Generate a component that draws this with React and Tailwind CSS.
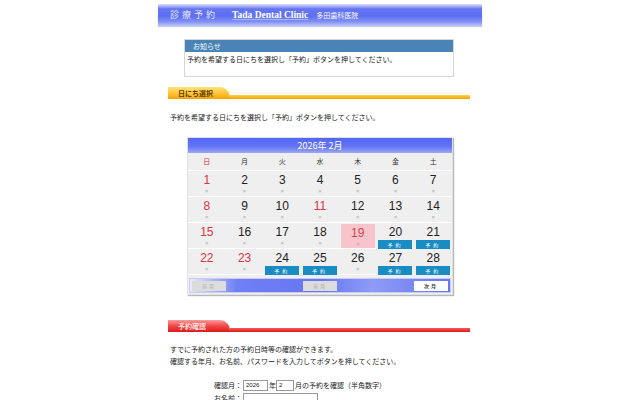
import React from "react";

const jp = { fontFamily: '"Noto Sans CJK JP", "Noto Sans", sans-serif' };
const num = { fontFamily: '"Liberation Sans", Arial, sans-serif' };

const weekdays = ["日", "月", "火", "水", "木", "金", "土"];

const weeks = [
    [1, 2, 3, 4, 5, 6, 7],
    [8, 9, 10, 11, 12, 13, 14],
    [15, 16, 17, 18, 19, 20, 21],
    [22, 23, 24, 25, 26, 27, 28],
];
const redDays = [1, 8, 11, 15, 22, 23];
const openDays = [20, 21, 24, 25, 27, 28];

function SectionHead({ title, tone }) {
    const orange = tone === "orange";
    return (
        <div className="flex items-end h-[12px] ml-[10px] mr-[12px]">
            <div
                className={
                    "w-[62px] h-[12px] rounded-tr-[10px] pl-[10px] flex items-center text-[7px] font-bold " +
                    (orange
                        ? "bg-[linear-gradient(#ffe27a,#ffc63a_50%,#f6a400)] text-[#5a3a00]"
                        : "bg-[linear-gradient(#ff9a9a,#f04848_50%,#dc1a1a)] text-[#ffe0e0]")
                }
            >
                {title}
            </div>
            <div className={"flex-1 h-[4px] " + (orange ? "bg-[linear-gradient(#ffd04a,#f5a300)]" : "bg-[linear-gradient(#f45a5a,#dc1a1a)]")} />
        </div>
    );
}

function DayCell({ d }) {
    const red = redDays.includes(d);
    const open = openDays.includes(d);
    const today = d === 19;
    return (
        <div className="h-[25px] flex justify-center">
            <div className={"w-[34px] flex flex-col items-center pt-[2px] " + (today ? "bg-[#f8c4cc] h-[24px] mt-[1px] pt-[1px]" : "")}>
                <div
                    style={num}
                    className={"text-[12px] leading-[14px] " + (today ? "text-[#c84858]" : red ? "text-[#dd3344]" : "text-[#222]")}
                >
                    {d}
                </div>
                {open ? (
                    <div style={jp} className="mt-[1px] w-[34px] h-[9px] bg-[#1a8cc4] text-white text-[5px] leading-[9px] text-center tracking-[3px]">
                        予約
                    </div>
                ) : (
                    <div style={num} className="text-[6px] leading-[8px] text-[#aaa]">×</div>
                )}
            </div>
        </div>
    );
}

export default function App() {
    return (
        <div className="w-[640px] h-[400px] bg-white overflow-hidden" style={jp}>
            <div className="w-[324px] mx-auto pt-[4px]">
                {/* header */}
                <div className="h-[22px] flex items-center bg-[linear-gradient(#dfe3ff,#6676f2_22%,#5d6ef3_55%,#8190f4_80%,#bcc4f8)] shadow-[0_1px_1px_#c8ccdd]">
                    <span className="ml-[12px] text-[9px] text-[#e6e8ff] tracking-[3px]">診療予約</span>
                    <span className="ml-[14px] text-[9.5px] font-bold text-white underline decoration-[#aab4f0]" style={{ fontFamily: '"Liberation Serif", serif' }}>
                        Tada Dental Clinic
                    </span>
                    <span className="ml-[8px] text-[7px] text-white">多田歯科医院</span>
                </div>

                {/* notice */}
                <div className="mt-[13px] ml-[26px] w-[270px] h-[38px] border border-[#d6d6d6]">
                    <div className="h-[12px] bg-[#4a84b6] text-white text-[7px] leading-[12px] pl-[8px]">お知らせ</div>
                    <div className="text-[7px] leading-[14px] pl-[2px] text-[#222]">予約を希望する日にちを選択し「予約」ボタンを押してください。</div>
                </div>

                <div className="mt-[10px]">
                    <SectionHead title="日にち選択" tone="orange" />
                </div>

                <div className="mt-[12px] ml-[12px] text-[7px] leading-[12px] text-[#222]">
                    予約を希望する日にちを選択し「予約」ボタンを押してください。
                </div>

                {/* calendar */}
                <div className="mt-[14px] ml-[29px] w-[266px] bg-[#efefef] shadow-[1px_1px_1px_#b8b8b8] border border-[#e2e2e2]">
                    <div className="h-[15px] bg-[linear-gradient(#5366f6,#6274f4_55%,#9aa6f6)] text-white text-[9px] leading-[15px] text-center">
                        2026年 2月
                    </div>
                    <div className="grid grid-cols-7 h-[18px] items-center border-b border-white">
                        {weekdays.map((w, i) => (
                            <div key={w} className={"text-center text-[7px] " + (i === 0 ? "text-[#dd3344]" : "text-[#333]")}>
                                {w}
                            </div>
                        ))}
                    </div>
                    {weeks.map((wk, i) => (
                        <div key={i} className="grid grid-cols-7 border-b border-white">
                            {wk.map((d) => (
                                <DayCell key={d} d={d} />
                            ))}
                        </div>
                    ))}
                    <div className="px-[1px] pt-[3px] pb-[1px]">
                        <div className="h-[15px] flex items-center justify-between px-[2px] border border-[#c6ccf4] bg-[linear-gradient(90deg,#e8ebff,#6f80f4_18%,#6576f2_50%,#8e9cf6_70%,#6576f2)]">
                            <div className="w-[34px] h-[10px] bg-[#dcdcdc] text-[#b0b0b0] text-[5px] leading-[10px] text-center tracking-[2px]">前月</div>
                            <div className="w-[34px] h-[10px] bg-[#dcdcdc] text-[#b0b0b0] text-[5px] leading-[10px] text-center tracking-[2px]">当月</div>
                            <div className="w-[34px] h-[10px] bg-white text-[#333] font-bold text-[5px] leading-[10px] text-center tracking-[2px]">次月</div>
                        </div>
                    </div>
                </div>

                <div className="mt-[25px]">
                    <SectionHead title="予約確認" tone="red" />
                </div>

                <div className="mt-[11px] ml-[12px] text-[7px] leading-[12px] text-[#222]">
                    <div>すでに予約された方の予約日時等の確認ができます。</div>
                    <div>確認する年月、お名前、パスワードを入力してボタンを押してください。</div>
                </div>

                {/* form */}
                <div className="mt-[12px] text-[7px] text-[#222]">
                    <div className="flex items-center h-[12px]">
                        <div className="w-[84px] text-right">確認月：</div>
                        <div className="ml-[1px] w-[25px] h-[11px] border border-[#999] text-[6px] leading-[9px] pl-[2px]" style={num}>2026</div>
                        <span className="ml-[1px]">年</span>
                        <div className="w-[18px] h-[11px] border border-[#999] text-[6px] leading-[9px] pl-[2px]" style={num}>2</div>
                        <span className="ml-[1px]">月の予約を確認（半角数字）</span>
                    </div>
                    <div className="flex items-center h-[12px] mt-[1px]">
                        <div className="w-[84px] text-right">お名前：</div>
                        <div className="ml-[1px] w-[75px] h-[11px] border border-[#999]" />
                    </div>
                </div>
            </div>
        </div>
    );
}
